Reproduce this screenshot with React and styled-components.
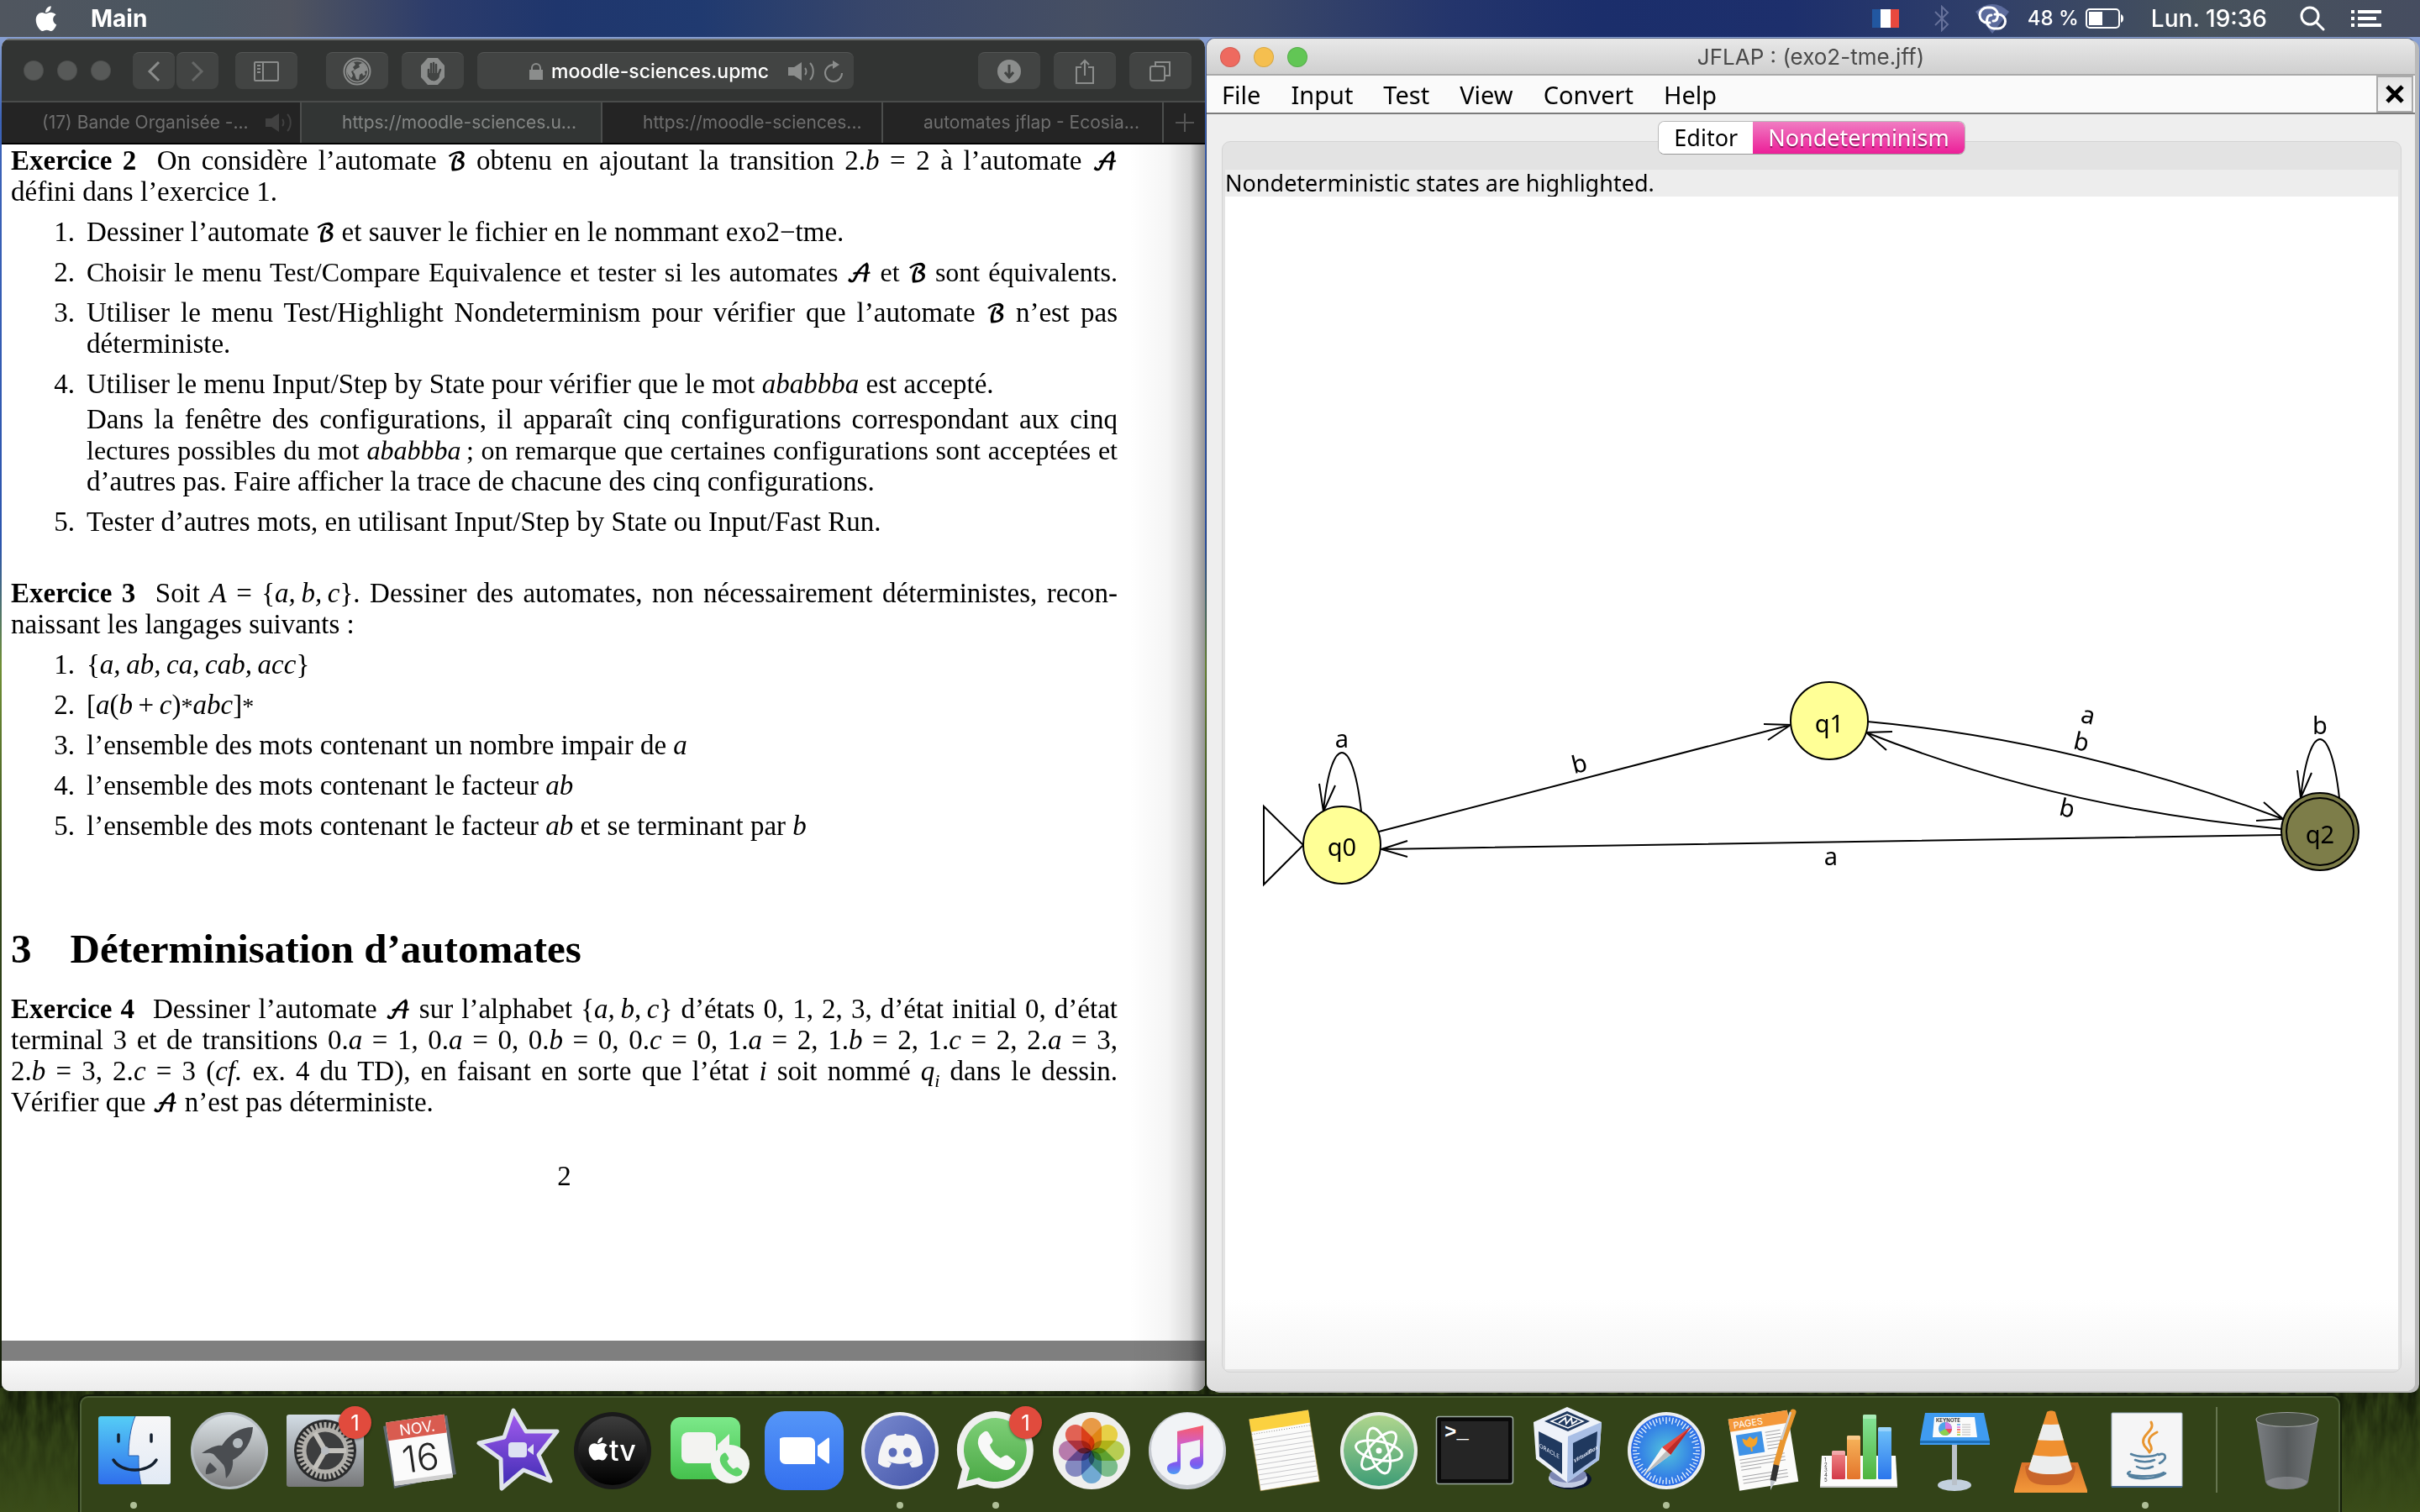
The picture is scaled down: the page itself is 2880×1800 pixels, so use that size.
import React from "react";
import styled, { createGlobalStyle } from "styled-components";

const ui = `Inter, "Liberation Sans", sans-serif`;
const java = `"Noto Sans", "Open Sans", sans-serif`;
const tex = `"Liberation Serif", "Times New Roman", serif`;

const Global = createGlobalStyle`
  *, *::before, *::after { box-sizing: border-box; }
  body { margin: 0; font-family: ${ui}; }
  button { border: 0; margin: 0; padding: 0; background: none; font: inherit; color: inherit; }
  svg { display: block; }
  p, h2, ol { margin: 0; padding: 0; }
`;

const Desktop = styled.div`
  min-height: 100vh;
  display: grid;
  grid-template-rows: auto 1fr auto;
  position: relative;
  overflow: hidden;
  background: linear-gradient(#a9bade 0, #3c63b8 8%, #2c55ad 36%, #6f8f35 44%, #32461a 60%, #141d09 92%, #2b3a13 96%, #3a4c18 100%);
`;

const Grass = styled.svg`
  position: absolute;
  left: 0;
  bottom: 0;
  width: 100%;
  height: 148px;
`;

/* ---------- menu bar ---------- */

const MenuBar = styled.header`
  position: relative;
  height: 44px;
  display: flex;
  align-items: center;
  justify-content: space-between;
  padding: 0 46px 0 42px;
  color: #fff;
  font-size: 28px;
  line-height: 32px;
  background: linear-gradient(90deg, #50565f 0, #4a5560 8%, #50545f 12%, #2c3c6b 18%, #1f366d 23%, #203a70 29%, #38466a 36%, #464f63 45%, #3a4768 52%, #24356c 60%, #1b2e6b 66%, #1d2f6c 74%, #303f69 82%, #47525c 91%, #464d60 100%);
`;

const MenuGroup = styled.div`
  display: flex;
  align-items: center;
`;

const AppName = styled.button`
  margin-left: 40px;
  font-weight: 700;
`;

const Status = styled.button`
  display: flex;
  align-items: center;
  margin-left: ${(p) => p.$gap}px;
  font-size: ${(p) => (p.$small ? 24 : 28)}px;
  font-weight: 500;
  white-space: nowrap;
`;

/* ---------- windows ---------- */

const Workspace = styled.main`
  position: relative;
  display: grid;
  grid-template-columns: 1432fr 1438fr;
  gap: 2px;
  padding: 2px 6px 6px 2px;
`;

const Browser = styled.section`
  min-width: 0;
  display: flex;
  flex-direction: column;
  border-radius: 10px;
  overflow: hidden;
  background: #fff;
`;

const Toolbar = styled.div`
  height: 76px;
  display: flex;
  align-items: center;
  padding: 0 16px 0 26px;
  background: #323433;
  border-top: 2px solid #6c6f6d;
  border-bottom: 2px solid #4a4c4b;
`;

const Lights = styled.div`
  display: flex;
  gap: 16px;
`;

const Light = styled.button`
  width: 24px;
  height: 24px;
  border-radius: 50%;
  background: ${(p) => p.$color};
  box-shadow: inset 0 0 0 1px rgba(0, 0, 0, 0.12);
`;

const ToolButton = styled.button`
  flex: none;
  width: ${(p) => (p.$narrow ? 50 : 74)}px;
  height: 44px;
  margin-left: ${(p) => p.$gap || 16}px;
  display: grid;
  place-items: center;
  border-radius: 8px;
  background: #424443;
  border-top: 1px solid #555756;
  color: ${(p) => (p.$dim ? "#666867" : "#8b8d8c")};
`;

const Address = styled.label`
  flex: 0 0 448px;
  min-width: 0;
  height: 44px;
  margin-left: 16px;
  margin-right: auto;
  padding: 0 12px 0 62px;
  display: flex;
  align-items: center;
  gap: 10px;
  border-radius: 8px;
  background: #424443;
  border-top: 1px solid #555756;
  color: #8b8d8c;
`;

const AddressInput = styled.input`
  flex: 1;
  width: 0;
  min-width: 0;
  padding: 0;
  border: 0;
  outline: 0;
  background: none;
  color: #fff;
  font: 500 23px/32px ${ui};
`;

const Tabs = styled.nav`
  height: 50px;
  display: grid;
  grid-template-columns: 357fr 358fr 334fr 334fr 49fr;
  background: #242424;
  border-bottom: 2px solid #000;
`;

const Tab = styled.button`
  min-width: 0;
  display: flex;
  align-items: center;
  justify-content: flex-start;
  gap: 20px;
  padding-left: 48px;
  font-size: 21px;
  line-height: 28px;
  white-space: nowrap;
  border-right: 2px solid #4c4e4d;
  background: ${(p) => (p.$active ? "#323534" : "#242424")};
  color: ${(p) => (p.$active ? "#858786" : "#6f6f6f")};

  svg { color: #414141; }
`;

const NewTab = styled.button`
  display: grid;
  place-items: center;
  color: #555;
`;

const Pdf = styled.div`
  flex: 1;
  display: flex;
  flex-direction: column;
  background: #7f7f7f;
  position: relative;

  &::after {
    content: "";
    position: absolute;
    inset: 0 0 0 auto;
    width: 90px;
    background: linear-gradient(90deg, rgba(0, 0, 0, 0) 0, rgba(0, 0, 0, 0.04) 50%, rgba(0, 0, 0, 0.14) 80%, rgba(0, 0, 0, 0.42) 100%);
    pointer-events: none;
  }
`;

const Page = styled.article`
  flex: 1;
  padding: 1px 104px 0 11px;
  background: #fff;
  color: #000;
  font-family: ${tex};
  font-size: 33px;
  line-height: 37px;
`;

const NextPage = styled.div`
  height: 36px;
  margin-top: 24px;
  background: linear-gradient(#fafafa, #ececec);
`;

const Line = styled.span`
  display: block;
  white-space: nowrap;
  font-size: ${(p) => (p.$tight ? 32 : 33)}px;
  text-align-last: ${(p) => (p.$fill || p.$tight ? "justify" : "left")};
`;

const Paragraph = styled.p`
  margin-top: ${(p) => p.$gap || 0}px;
`;

const Label = styled.strong`
  margin-right: 12px;
`;

const List = styled.ol`
  list-style: none;
  counter-reset: item;
`;

const Item = styled.li`
  counter-increment: item;
  display: grid;
  grid-template-columns: 76px minmax(0, 1fr);
  column-gap: 14px;
  margin-top: 11px;

  &::before {
    content: counter(item) ".";
    text-align: right;
  }
`;

const Heading = styled.h2`
  display: flex;
  gap: 46px;
  margin-top: 102px;
  margin-bottom: 27px;
  font-size: 49px;
  line-height: 52px;
`;

const Script = styled.span`
  font-family: "DejaVu Math TeX Gyre", "DejaVu Serif", "DejaVu Sans", serif;
  font-size: 28px;
  font-weight: 700;
  line-height: 0;
`;

const Sub = styled.sub`
  font-size: 22px;
  line-height: 0;
`;

const Star = styled.span`
  font-size: 28px;
  line-height: 0;
`;

const PageNumber = styled(Paragraph)`
  text-align: center;
`;

/* ---------- JFLAP ---------- */

const Jflap = styled.section`
  min-width: 0;
  display: flex;
  flex-direction: column;
  border-radius: 10px;
  background: #eeeeee;
  box-shadow: 5px 2px 0 #b9b9b9, 0 0 0 1px rgba(0, 0, 0, 0.35);
  font-family: ${java};
`;

const TitleBar = styled.div`
  height: 44px;
  display: grid;
  grid-template-columns: 1fr auto 1fr;
  align-items: center;
  padding: 2px 16px 0;
  border-radius: 10px 10px 0 0;
  background: linear-gradient(#e8e8e8, #cfcfcf);
  border-bottom: 2px solid #a9a9a9;
`;

const Title = styled.span`
  font: 400 26px/32px ${ui};
  color: #4a4a4a;
`;

const JMenuBar = styled.nav`
  height: 46px;
  display: flex;
  align-items: stretch;
  background: #fafafa;
  border-bottom: 2px solid #7b7b7b;
`;

const JMenu = styled.button`
  padding: 2px 18px 0;
  font-size: 29px;
  line-height: 36px;
`;

const CloseTab = styled.button`
  width: 44px;
  margin-left: auto;
  margin-right: 2px;
  display: grid;
  place-items: center;
  border: 2px solid #aaaaaa;
  background: linear-gradient(#e4e4e4, #f6f6f6);
`;

const JBody = styled.div`
  flex: 1;
  display: flex;
  flex-direction: column;
  padding: 8px 16px 22px 18px;
  border-radius: 0 0 10px 10px;
  background: linear-gradient(#eeeeee 96%, #dddddd);
`;

const Segments = styled.div`
  position: relative;
  align-self: center;
  display: flex;
  height: 40px;
  margin-bottom: -16px;
  border-radius: 8px;
  overflow: hidden;
  border: 1px solid #b9b9b9;
  border-bottom-color: #999;
  background: #fff;
`;

const Segment = styled.button`
  padding: 0 18px;
  font-size: 27px;
  line-height: 36px;
  color: ${(p) => (p.$on ? "#fff" : "#000")};
  text-shadow: ${(p) => (p.$on ? "0 2px 1px rgba(80, 0, 50, 0.6)" : "none")};
  background: ${(p) => (p.$on ? "linear-gradient(#f07cc2, #ec1e98)" : "#fff")};
`;

const Group = styled.div`
  flex: 1;
  display: flex;
  flex-direction: column;
  padding: 33px 3px 3px;
  border: 1px solid #d4d4d4;
  border-radius: 10px;
  background: #e3e3e3;
`;

const Notice = styled.p`
  height: 32px;
  background: #ededed;
  font-size: 27px;
  line-height: 32px;
`;

const Canvas = styled.div`
  flex: 1;
  background: linear-gradient(#fff 94%, #f5f5f5);
`;

const Diagram = styled.svg`
  width: 100%;
  height: auto;
  font-family: ${java};
  font-size: 29px;
`;

/* ---------- dock ---------- */

const Dock = styled.footer`
  position: relative;
  justify-self: center;
  display: flex;
  padding: 4px 5px 4px;
  border: 2px solid #4e6038;
  border-bottom: 0;
  border-radius: 10px 10px 0 0;
  background: #334318;
  box-shadow: 0 0 0 2px #141d0a;
`;

const DockItem = styled.button`
  width: 114px;
  display: flex;
  flex-direction: column;
  align-items: center;
  gap: 8px;
  position: relative;
`;

const Dot = styled.span`
  width: 8px;
  height: 8px;
  border-radius: 50%;
  background: ${(p) => (p.$on ? "#afbf97" : "transparent")};
`;

const Badge = styled.span`
  position: absolute;
  top: 6px;
  left: 73px;
  width: 39px;
  height: 39px;
  border-radius: 50%;
  background: #e14b3d;
  color: #fff;
  font-size: 26px;
  line-height: 39px;
  text-align: center;
  box-shadow: 0 1px 3px rgba(0, 0, 0, 0.5);
`;

const Separator = styled.span`
  width: 2px;
  height: 102px;
  margin: 7px 25px 0 27px;
  background: #66754f;
`;

/* ---------- small drawings ---------- */

const applePath =
  "M18.7 1.2c.2 2-.6 3.9-1.7 5.3-1.2 1.4-3 2.5-4.9 2.4-.2-1.9.7-3.9 1.8-5.2 1.2-1.4 3.200-2.400 4.800-2.500zM24.500 11.500c-.3.200-3.300 1.900-3.300 5.700 0 4.400 3.900 6 4 6-.1.200-.6 2.200-2.100 4.200-1.200 1.800-2.500 3.600-4.600 3.600-2 0-2.500-1.200-4.900-1.200-2.300 0-3.100 1.200-5 1.200-1.900 0-3.200-1.700-4.700-3.700C2.100 24.900.7 21.200.7 17.600c0-5.700 3.700-8.700 7.300-8.700 2 0 3.600 1.300 4.800 1.300 1.200 0 3-1.400 5.300-1.400.9 0 4 .1 6.400 2.700z";

const Speaker = () => (
  <svg width="32" height="24" viewBox="0 0 32 24" fill="none" stroke="currentColor" strokeWidth="2">
    <path d="M0 7h7l9-6v22l-9-6H0z" fill="currentColor" stroke="none" />
    <path d="M20 8c2 2 2 6 0 8M26 2c5 5 5 15 0 20" />
  </svg>
);

const Chevron = ({ right }) => (
  <svg width="16" height="26" viewBox="0 0 16 26" fill="none" stroke="currentColor" strokeWidth="3">
    <path d={right ? "M2 2l11 11L2 24" : "M14 2L3 13l11 11"} />
  </svg>
);

/* ---------- dock icons ---------- */

const Svg = ({ children }) => (
  <svg width="114" height="112" viewBox="0 0 114 112">
    {children}
  </svg>
);

const range = (n) => Array.from({ length: n }, (_, i) => i);

const Finder = () => (
  <Svg>
    <defs>
      <linearGradient id="fa" x1="0" y1="0" x2="0" y2="1"><stop stopColor="#55cdf6" /><stop offset="1" stopColor="#2f6fec" /></linearGradient>
      <linearGradient id="fb" x1="0" y1="0" x2="0" y2="1"><stop stopColor="#f7f7f8" /><stop offset="1" stopColor="#e2eaf5" /></linearGradient>
    </defs>
    <rect x="15" y="18" width="86" height="81" rx="3" fill="url(#fa)" />
    <path d="M59 18C53 32 51 50 51 65h12c0 12 0 22 3 34h32a3 3 0 0 0 3-3V21a3 3 0 0 0-3-3z" fill="url(#fb)" />
    <path d="M59 18C53 32 51 50 51 65h12c0 12 0 22 3 34" fill="none" stroke="#2b5fae" strokeWidth="1" />
    <path d="M39 40v8M78 40v8M33 70c10 16 41 16 51 0" fill="none" stroke="#14202f" strokeWidth="3.500" strokeLinecap="round" />
  </Svg>
);

const Launchpad = () => (
  <Svg>
    <defs><linearGradient id="la" x1="0" y1="0" x2="0" y2="1"><stop stopColor="#dbe2e6" /><stop offset="1" stopColor="#7e7f80" /></linearGradient></defs>
    <circle cx="57" cy="59" r="46" fill="#b7bec4" />
    <circle cx="57" cy="59" r="43" fill="url(#la)" />
    <path d="M85 31c-15 0-28 8-37 22-7-1-15 3-24 9 5 0 10-1 14 1l12 13c3 5 2 10 3 16 5-5 9-13 8-22C76 62 84 47 85 31z" fill="#4a4d51" />
    <path d="M34 73c-3 3-6 8-5 14 6 0 11-2 13-6z" fill="#4a4d51" />
    <circle cx="67" cy="50" r="6" fill="#b3babf" />
  </Svg>
);

const Prefs = () => (
  <Svg>
    <defs><linearGradient id="pa" x1="0" y1="0" x2="0" y2="1"><stop stopColor="#d3dde5" /><stop offset="1" stopColor="#77787a" /></linearGradient></defs>
    <rect x="11" y="16" width="92" height="86" rx="3" fill="url(#pa)" />
    <circle cx="57" cy="59" r="37" fill="#2a2b2c" />
    <g fill="#b2b0ab">
      {range(36).map((i) => <rect key={i} x="55.500" y="25" width="3" height="8" transform={`rotate(${i * 10} 57 59)`} />)}
    </g>
    <circle cx="57" cy="59" r="25" fill="#3d3e3f" stroke="#b2b0ab" strokeWidth="5" />
    <g stroke="#c3c1bc" strokeWidth="6"><path d="M57 59h25M57 59L44.500 37.500M57 59L44.500 80.500" /></g>
    <circle cx="57" cy="59" r="5" fill="#b9bcc0" />
  </Svg>
);

const Calendar = () => (
  <Svg>
    <path d="M12 30L88 17l11 70-74 17z" fill="#606a72" />
    <g transform="rotate(-8 57 57)">
      <rect x="20" y="20" width="70" height="76" fill="#fbfbfb" />
      <path d="M20 96h70v-5H20z" fill="#cfcfcf" />
      <rect x="20" y="20" width="70" height="22" fill="#d95c50" />
      <text x="56" y="38" fontSize="18" fill="#fff" textAnchor="middle" fontFamily="Inter">NOV.</text>
      <text x="55" y="83" fontSize="44" fontWeight="300" fill="#222" textAnchor="middle" fontFamily="Inter">16</text>
    </g>
  </Svg>
);

const IMovie = () => (
  <Svg>
    <defs><linearGradient id="ia" x1="0" y1="0" x2="0" y2="1"><stop stopColor="#a65df0" /><stop offset="1" stopColor="#3c2bb2" /></linearGradient></defs>
    <path d="M53 11l15 25 37 0-22 28 14 31-32-13-26 22-1-35-26-19 30-7z" fill="url(#ia)" stroke="#dfe4ec" strokeWidth="5" strokeLinejoin="round" />
    <rect x="47" y="49" width="22" height="18" rx="4" fill="#dde1f2" />
    <path d="M70 57l7-6v13l-7-5z" fill="#dde1f2" />
  </Svg>
);

const AppleTv = () => (
  <Svg>
    <circle cx="57" cy="59" r="46" fill="#1a1a1a" />
    <defs><linearGradient id="ta" x1="0" y1="0" x2="0" y2="1"><stop stopColor="#3d3d3d" /><stop offset="1" stopColor="#000" /></linearGradient></defs>
    <circle cx="57" cy="59" r="41" fill="url(#ta)" />
    <path transform="translate(28 42) scale(.92)" d={applePath} fill="#fff" />
    <text x="53" y="71" fontSize="34" fontWeight="500" fill="#fff" fontFamily="Inter">tv</text>
  </Svg>
);

const phonePath = "M6 2c2-2 4-2 5 0l3 5c1 2 0 3-2 5 1 4 5 9 9 11 2-1 4-3 6-2l5 4c2 1 1 3 0 5-3 4-8 4-13 1C10 27 3 18 2 11c0-4 1-7 4-9z";

const FaceTime = () => (
  <Svg>
    <defs><linearGradient id="ga" x1="0" y1="0" x2="0" y2="1"><stop stopColor="#7ce98a" /><stop offset="1" stopColor="#45c14d" /></linearGradient></defs>
    <rect x="12" y="19" width="83" height="74" rx="12" fill="url(#ga)" />
    <rect x="25" y="37" width="41" height="37" rx="8" fill="#f3f3f1" />
    <path d="M68 52l14-13v34L68 61z" fill="#f3f3f1" />
    <circle cx="83" cy="75" r="23" fill="#f2f4f1" />
    <path transform="translate(69 61) scale(.86)" d={phonePath} fill="#5ed269" />
  </Svg>
);

const Zoom = () => (
  <Svg>
    <defs><linearGradient id="za" x1="0" y1="0" x2="0" y2="1"><stop stopColor="#5596f8" /><stop offset="1" stopColor="#3470ef" /></linearGradient></defs>
    <rect x="10" y="12" width="94" height="94" rx="24" fill="url(#za)" />
    <path d="M34 43h29c4 0 7 3 7 7v25H35c-4 0-7-3-7-7V45c0-1 3-2 6-2zM73 53l12-9c1-1 2 0 2 1v28c0 1-1 2-2 1l-12-9z" fill="#fff" />
  </Svg>
);

const Discord = () => (
  <Svg>
    <defs><linearGradient id="da" x1="0" y1="0" x2="1" y2="1"><stop stopColor="#7a8bd0" /><stop offset="1" stopColor="#4354a8" /></linearGradient></defs>
    <circle cx="57" cy="59" r="46" fill="#f0f1f3" />
    <circle cx="57" cy="59" r="42" fill="url(#da)" />
    <path d="M40 43c4-3 8-4 12-4l1 2h9l1-2c4 0 8 1 12 4 6 9 9 20 9 31-3 4-8 5-13 5l-3-5 5-3c-10 5-21 5-31 0l5 3-3 5c-5 0-10-2-13-5 0-11 3-22 9-31z" fill="#f4f4f5" />
    <ellipse cx="48.500" cy="61" rx="5" ry="5.500" fill="#5b6cba" /><ellipse cx="66" cy="61" rx="5" ry="5.500" fill="#5b6cba" />
  </Svg>
);

const WhatsApp = () => (
  <Svg>
    <defs><linearGradient id="wa" x1="0" y1="0" x2="0" y2="1"><stop stopColor="#7fd078" /><stop offset="1" stopColor="#4caa47" /></linearGradient></defs>
    <path d="M57 12a46 46 0 1 1-22 87L11 105l6-24A46 46 0 0 1 57 12z" fill="#efefef" />
    <path d="M57 20a38 38 0 1 1-20 71l-15 4 4-15A38 38 0 0 1 57 20z" fill="url(#wa)" />
    <path transform="translate(33 35) scale(1.420)" d={phonePath} fill="#f8f8f8" />
  </Svg>
);

const petals = ["#f7952d", "#f6d92e", "#b9d53c", "#6fc083", "#63a9dc", "#7a80c6", "#b96fae", "#ee4f3f"];
const Petal = styled.rect`
  mix-blend-mode: multiply;
`;
const Photos = () => (
  <Svg>
    <circle cx="57" cy="59" r="46" fill="#efefee" />
    {petals.map((c, i) => (
      <Petal key={c} x="45" y="20" width="24" height="39" rx="12" fill={c} opacity=".86" transform={`rotate(${i * 45} 57 59)`} />
    ))}
  </Svg>
);

const Music = () => (
  <Svg>
    <defs><linearGradient id="ma" x1="0" y1="0" x2="0" y2="1"><stop stopColor="#f75b66" /><stop offset=".4" stopColor="#cf5fd0" /><stop offset=".8" stopColor="#7a5cf0" /><stop offset="1" stopColor="#4a9cf5" /></linearGradient></defs>
    <circle cx="57" cy="59" r="46" fill="#c5c9cf" />
    <circle cx="57" cy="57" r="43" fill="#f1f3f6" />
    <path d="M45 36l31-7v44c0 5-4 8-8 8-5 0-8-3-8-7 0-5 5-7 12-8V46l-23 5v28c0 5-4 8-8 8-5 0-8-3-8-7 0-5 5-7 12-8z" fill="url(#ma)" />
  </Svg>
);

const Notes = () => (
  <Svg>
    <g transform="rotate(-9 57 59)">
      <rect x="23" y="16" width="71" height="86" fill="#fbfbfa" stroke="#b59a4a" strokeWidth=".6" />
      <rect x="23" y="16" width="71" height="15" fill="#fbd140" />
      <path d="M23 34h71" stroke="#888" strokeDasharray="1 2" />
      {range(10).map((i) => <path key={i} d={`M24 ${41 + i * 6}h69`} stroke="#c9c9cc" strokeWidth="1" />)}
    </g>
  </Svg>
);

const Atom = () => (
  <Svg>
    <defs><linearGradient id="aa" x1="0" y1="0" x2="0" y2="1"><stop stopColor="#b0d68d" /><stop offset="1" stopColor="#3e9d76" /></linearGradient></defs>
    <circle cx="57" cy="59" r="46" fill="#e9ece9" />
    <circle cx="57" cy="59" r="42" fill="url(#aa)" />
    <g fill="none" stroke="#fff" strokeWidth="3">
      <ellipse cx="57" cy="59" rx="28" ry="11" transform="rotate(12 57 59)" />
      <ellipse cx="57" cy="59" rx="28" ry="11" transform="rotate(72 57 59)" />
      <ellipse cx="57" cy="59" rx="28" ry="11" transform="rotate(132 57 59)" />
    </g>
    <circle cx="57" cy="59" r="3.500" fill="#fff" />
  </Svg>
);

const Terminal = () => (
  <Svg>
    <rect x="11.500" y="18.500" width="91" height="80" rx="3" fill="#0a0a0a" stroke="#9aa8a0" strokeWidth="1.500" />
    <rect x="17" y="24" width="80" height="69" fill="#252525" />
    <text x="21" y="44" fontSize="24" fontWeight="700" fill="#fff" fontFamily="Liberation Mono, monospace">&gt;_</text>
  </Svg>
);

const VBox = () => (
  <Svg>
    <ellipse cx="57" cy="93" rx="25" ry="12" fill="#0c1634" />
    <ellipse cx="54" cy="92" rx="23" ry="11" fill="#c3cbe2" />
    <ellipse cx="54" cy="88" rx="22" ry="9" fill="#7c87b3" />
    <path d="M53 7l41 18-3 45-38 27-37-28-3-44z" fill="#eef2f9" />
    <path d="M54 42l40-17-3 45-38 27z" fill="#a9bfe6" />
    <path d="M53 12l27 12-26 12-28-12z" fill="#20395f" />
    <path d="M53 16l19 8-18 8-20-8z" fill="none" stroke="#fff" strokeWidth="1.500" />
    <path d="M43 26l8-6 1 7 6-7 1 7 6-4" fill="none" stroke="#fff" strokeWidth="1.800" />
    <path d="M19 36l28 14v37L20 66z" fill="#20395f" />
    <path d="M60 50l29-14-2 32-27 19z" fill="#20395f" />
    <text transform="matrix(.86 .5 0 1 20 55)" fontSize="7" fill="#e8eefc" fontFamily="Inter">ORACLE</text>
    <text transform="matrix(.82 -.5 0 1 61 74)" fontSize="7" fontWeight="700" fill="#e8eefc" fontFamily="Liberation Sans Narrow, Liberation Sans">VirtualBox</text>
  </Svg>
);

const Safari = () => (
  <Svg>
    <defs><radialGradient id="sa"><stop stopColor="#52c3dd" /><stop offset="1" stopColor="#2a6be8" /></radialGradient></defs>
    <circle cx="57" cy="59" r="46" fill="#eceef0" />
    <circle cx="57" cy="59" r="42" fill="url(#sa)" />
    <g stroke="#e9f4fb" strokeWidth="1.300">
      {range(60).map((i) => <path key={i} d={i % 2 ? "M57 19v5" : "M57 19v8"} transform={`rotate(${i * 6} 57 59)`} />)}
    </g>
    <path d="M87 30L52 55l10 9z" fill="#e5473e" />
    <path d="M87 30L57 59.500l5 4.500z" fill="#b92b28" />
    <path d="M30 88l22-33 10 9z" fill="#f4f4f4" />
    <path d="M30 88l27-28.500 5 4.500z" fill="#bdbdbd" />
  </Svg>
);

const Pages = () => (
  <Svg>
    <g transform="rotate(-9 57 59)">
      <rect x="23" y="16" width="71" height="86" fill="#fbfbfa" />
      <rect x="23" y="16" width="71" height="15" fill="#f4983a" />
      <text x="28" y="28" fontSize="11" fill="#fff" fontFamily="Inter">PAGES</text>
      <rect x="29" y="36" width="31" height="25" fill="#3f92e6" />
      <path d="M44 58v-5c-6-1-8-6-8-12l5 3 4-4 4 4 5-3c0 6-2 11-8 12v5z" fill="#f5a32a" />
      {range(6).map((i) => <path key={i} d={`M64 ${38 + i * 4}h18`} stroke="#a5a5a8" strokeWidth="1" />)}
      {range(8).map((i) => <path key={i} d={`M29 ${66 + i * 4}h${i === 3 ? 24 : 54}`} stroke="#a5a5a8" strokeWidth={i === 4 ? 0 : 1} />)}
    </g>
    <path d="M94 13L82 47 74 75" fill="none" stroke="#e9962e" strokeWidth="7" strokeLinecap="round" />
    <path d="M91 13L80 46" stroke="#c9ced4" strokeWidth="2.500" />
    <path d="M74 76l-4 19" stroke="#333" strokeWidth="7" />
    <path d="M67 94l6 1-6 11z" fill="#bfc4cb" />
  </Svg>
);

const bars = [
  { x: 26, y: 59, a: "#f08a8a", b: "#d33a48" },
  { x: 44, y: 41, a: "#f7b65c", b: "#e3742b" },
  { x: 63, y: 16, a: "#86e59a", b: "#4fb43d" },
  { x: 81, y: 31, a: "#6fc3fa", b: "#2b76ec" },
];
const Numbers = () => (
  <Svg>
    <path d="M14 65h88l2 36H12z" fill="#fcfcfc" />
    <path d="M12 101h92v2H12z" fill="#c8c8c8" />
    {[1, 2, 3, 4, 5].map((n) => <text key={n} x="17" y={66 + n * 6} fontSize="6" fill="#333" fontFamily="Inter">{n}</text>)}
    {bars.map((b, i) => (
      <g key={b.x}>
        <defs><linearGradient id={`nb${i}`} x1="0" y1="0" x2="0" y2="1"><stop stopColor={b.a} /><stop offset="1" stopColor={b.b} /></linearGradient></defs>
        <rect x={b.x} y={b.y} width="16" height={93 - b.y} rx="1.500" fill={`url(#nb${i})`} />
        <rect x={b.x} y={b.y} width="16" height="5" rx="1.500" fill="#fff" opacity=".3" />
      </g>
    ))}
  </Svg>
);

const Keynote = () => (
  <Svg>
    <ellipse cx="58" cy="100" rx="20" ry="7" fill="#c3d0de" />
    <path d="M58 52v48" stroke="#bac1c9" strokeWidth="6" />
    <path d="M23 14h70l7 33v5H17v-5z" fill="#3f9bf0" />
    <path d="M17 47h83v3H17z" fill="#1d6fb9" />
    <path d="M34 19h48l3 24H32z" fill="#fbfbfb" />
    <text x="36" y="25" fontSize="6" fontWeight="700" fill="#333" fontFamily="Inter">KEYNOTE</text>
    <circle cx="47" cy="33" r="8" fill="#4fa3e8" />
    <path d="M47 33v-8a8 8 0 0 1 8 8z" fill="#d57be0" />
    <path d="M47 33h8a8 8 0 0 1-3 6z" fill="#ef4d55" />
    <path d="M47 33l5 6a8 8 0 0 1-12-2z" fill="#8cd04e" />
    {["#4fa3e8", "#d57be0", "#ef4d55", "#f3a23a", "#8cd04e"].map((c, i) => <path key={c} d={`M61 ${28 + i * 3}h4`} stroke={c} strokeWidth="1.500" />)}
    <path d="M67 28h10M67 31h10M67 34h10M67 37h10M67 40h10" stroke="#bbb" strokeWidth="1" />
  </Svg>
);

const Vlc = () => (
  <Svg>
    <defs>
      <linearGradient id="va" x1="0" y1="0" x2="0" y2="1"><stop stopColor="#d9722a" /><stop offset="1" stopColor="#f3993a" /></linearGradient>
      <clipPath id="vc"><path d="M54 13c2-2 8-2 10 0l20 68c-6 8-46 8-52 0z" /></clipPath>
    </defs>
    <path d="M24 73h67l11 33v3H15v-3z" fill="url(#va)" />
    <path d="M28 78c8-8 54-8 60 0-2 20-8 22-30 22s-28-4-30-22z" fill="#c9652a" />
    <g clipPath="url(#vc)">
      <rect x="20" y="8" width="80" height="90" fill="#ef9030" />
      <path d="M20 25q38 6 80 0v18q-42 8-80 0zM20 60q38 12 80 0v40H20z" fill="#eceded" />
    </g>
  </Svg>
);

const Java = () => (
  <Svg>
    <rect x="17" y="14" width="84" height="88" rx="1" fill="#f5f5f6" stroke="#9fb0c4" />
    <path d="M17 102h84" stroke="#4a6c94" strokeWidth="2" />
    <g fill="none" strokeLinecap="round">
      <path d="M64 25c6 11-15 15-8 28 2 3 5 5 6 8M71 37c-8 4-12 9-8 15 2 4 2 6-1 9" stroke="#e8952f" strokeWidth="3" />
      <path d="M40 63c8 4 26 4 32 0M73 64c8-4 12 4 1 10M45 70c6 3 17 3 23 0M47 78c5 3 13 3 19 0M39 84c-14 5 28 8 40 1M38 89c10 5 34 4 43-3" stroke="#54809f" strokeWidth="2.600" />
    </g>
  </Svg>
);

const Trash = () => (
  <Svg>
    <defs><linearGradient id="xa" x1="0" x2="1"><stop stopColor="#80838a" /><stop offset=".5" stopColor="#5a5d62" /><stop offset="1" stopColor="#7b7e84" /></linearGradient></defs>
    <path d="M21 22l11 74c2 12 48 12 51 0l12-74z" fill="url(#xa)" opacity=".93" />
    <ellipse cx="58" cy="22" rx="37" ry="8.500" fill="#4c5349" stroke="#9da19f" strokeWidth="1.200" />
    <path d="M33 96c8-8 42-8 49 0-6 12-44 12-49 0z" fill="#a6a9ad" opacity=".45" />
  </Svg>
);

const dock = [
  { name: "Finder", icon: Finder, open: true },
  { name: "Launchpad", icon: Launchpad },
  { name: "Préférences", icon: Prefs, badge: "1" },
  { name: "Calendrier", icon: Calendar },
  { name: "iMovie", icon: IMovie },
  { name: "TV", icon: AppleTv },
  { name: "FaceTime", icon: FaceTime },
  { name: "Zoom", icon: Zoom },
  { name: "Discord", icon: Discord, open: true },
  { name: "WhatsApp", icon: WhatsApp, open: true, badge: "1" },
  { name: "Photos", icon: Photos },
  { name: "Musique", icon: Music },
  { name: "Notes", icon: Notes },
  { name: "Atom", icon: Atom },
  { name: "Terminal", icon: Terminal },
  { name: "VirtualBox", icon: VBox },
  { name: "Safari", icon: Safari, open: true },
  { name: "Pages", icon: Pages },
  { name: "Numbers", icon: Numbers },
  { name: "Keynote", icon: Keynote },
  { name: "VLC", icon: Vlc },
  { name: "Java", icon: Java, open: true },
];

const DockTile = ({ name, icon: Icon, open, badge }) => (
  <DockItem aria-label={name}>
    <Icon />
    {badge && <Badge>{badge}</Badge>}
    <Dot $on={open} />
  </DockItem>
);

/* ---------- page text ---------- */

const A = () => <Script>𝒜</Script>;
const B = () => <Script>ℬ</Script>;

const Document = () => (
  <Page>
    <Paragraph>
      <Line $fill><Label>Exercice 2</Label> On considère l’automate <B /> obtenu en ajoutant la transition 2.<i>b</i> = 2 à l’automate <A /></Line>
      <Line>défini dans l’exercice 1.</Line>
    </Paragraph>
    <List>
      <Item><Line>Dessiner l’automate <B /> et sauver le fichier en le nommant exo2−tme.</Line></Item>
      <Item><Line $tight>Choisir le menu Test/Compare Equivalence et tester si les automates <A /> et <B /> sont équivalents.</Line></Item>
      <Item>
        <div>
          <Line $fill>Utiliser le menu Test/Highlight Nondeterminism pour vérifier que l’automate <B /> n’est pas</Line>
          <Line>déterministe.</Line>
        </div>
      </Item>
      <Item>
        <div>
          <Line>Utiliser le menu Input/Step by State pour vérifier que le mot <i>ababbba</i> est accepté.</Line>
          <Paragraph $gap={5}>
            <Line $fill>Dans la fenêtre des configurations, il apparaît cinq configurations correspondant aux cinq</Line>
            <Line $tight>lectures possibles du mot <i>ababbba</i>{"\u2009"}; on remarque que certaines configurations sont acceptées et</Line>
            <Line>d’autres pas. Faire afficher la trace de chacune des cinq configurations.</Line>
          </Paragraph>
        </div>
      </Item>
      <Item><Line>Tester d’autres mots, en utilisant Input/Step by State ou Input/Fast Run.</Line></Item>
    </List>
    <Paragraph $gap={48}>
      <Line $fill><Label>Exercice 3</Label> Soit <i>A</i> = {"{"}<i>a,{"\u2009"}b,{"\u2009"}c</i>{"}"}. Dessiner des automates, non nécessairement déterministes, recon-</Line>
      <Line>naissant les langages suivants :</Line>
    </Paragraph>
    <List>
      <Item><Line>{"{"}<i>a,{"\u2009"}ab,{"\u2009"}ca,{"\u2009"}cab,{"\u2009"}acc</i>{"}"}</Line></Item>
      <Item><Line>[<i>a</i>(<i>b</i>{"\u2009"}+{"\u2009"}<i>c</i>)<Star>*</Star><i>abc</i>]<Star>*</Star></Line></Item>
      <Item><Line>l’ensemble des mots contenant un nombre impair de <i>a</i></Line></Item>
      <Item><Line>l’ensemble des mots contenant le facteur <i>ab</i></Line></Item>
      <Item><Line>l’ensemble des mots contenant le facteur <i>ab</i> et se terminant par <i>b</i></Line></Item>
    </List>
    <Heading><span>3</span><span>Déterminisation d’automates</span></Heading>
    <Paragraph>
      <Line $fill><Label>Exercice 4</Label> Dessiner l’automate <A /> sur l’alphabet {"{"}<i>a,{"\u2009"}b,{"\u2009"}c</i>{"}"} d’états 0, 1, 2, 3, d’état initial 0, d’état</Line>
      <Line $fill>terminal 3 et de transitions 0.<i>a</i> = 1, 0.<i>a</i> = 0, 0.<i>b</i> = 0, 0.<i>c</i> = 0, 1.<i>a</i> = 2, 1.<i>b</i> = 2, 1.<i>c</i> = 2, 2.<i>a</i> = 3,</Line>
      <Line $fill>2.<i>b</i> = 3, 2.<i>c</i> = 3 (<i>cf.</i> ex. 4 du TD), en faisant en sorte que l’état <i>i</i> soit nommé <i>q</i><Sub><i>i</i></Sub> dans le dessin.</Line>
      <Line>Vérifier que <A /> n’est pas déterministe.</Line>
    </Paragraph>
    <PageNumber $gap={51}>2</PageNumber>
  </Page>
);

/* ---------- automaton ---------- */

const Automaton = () => (
  <Diagram viewBox="1458 234 1396 1390">
    <g fill="none" stroke="#000" strokeWidth="2">
      <path d="M1504 960v93l47-47z" />
      <path d="M1641 990L2131 863M2099 862l32 1-27 18" />
      <path d="M2222 859Q2467 881 2717 975M2694 955l23 20-32 2" />
      <path d="M2716 987Q2447 962 2221 872M2252 871l-31 1 24 21" />
      <path d="M2715 994L1644 1011M1675 1001l-31 10 31 9" />
      <path d="M1620 966C1614 912 1604 896 1597 896S1580 912 1575 966M1570 933l5 33 14-31" />
      <path d="M2784 950C2778 896 2768 880 2761 880S2744 896 2738 950M2734 917l4 33 13-30" />
    </g>
    <g stroke="#000" strokeWidth="2">
      <circle cx="1597" cy="1006" r="46" fill="#ffff96" />
      <circle cx="2177" cy="858" r="46" fill="#ffff96" />
      <circle cx="2761" cy="990" r="46" fill="#7d7d49" />
      <circle cx="2761" cy="990" r="40" fill="none" />
    </g>
    <g textAnchor="middle">
      <text x="1597" y="1019">q0</text>
      <text x="2177" y="872">q1</text>
      <text x="2761" y="1004">q2</text>
      <text x="1597" y="890">a</text>
      <text x="2761" y="874">b</text>
      <text transform="translate(1882 919) rotate(-14)">b</text>
      <text transform="translate(2483 861) rotate(13)">a</text>
      <text transform="translate(2475 893) rotate(13)">b</text>
      <text transform="translate(2458 972) rotate(13)">b</text>
      <text x="2179" y="1030">a</text>
    </g>
  </Diagram>
);

export default function App() {
  return (
    <>
      <Global />
      <Desktop>
        <Grass preserveAspectRatio="none">
          <filter id="grass"><feTurbulence type="fractalNoise" baseFrequency="0.09 0.025" numOctaves="3" seed="4" /><feColorMatrix values="0 0 0 0 .04  0 0 0 0 .07  0 0 0 0 .01  1.600 0 0 0 -.45" /></filter>
          <rect width="100%" height="100%" filter="url(#grass)" />
        </Grass>

        <MenuBar>
          <MenuGroup>
            <svg width="26" height="32" viewBox="0 0 26 32" fill="#fff"><path d={applePath} /></svg>
            <AppName>Main</AppName>
          </MenuGroup>
          <MenuGroup>
            <Status aria-label="Clavier français">
              <svg width="32" height="22" viewBox="0 0 32 22"><path d="M0 0h10v22H0z" fill="#2257a0" /><path d="M10 0h12v22H10z" fill="#fff" /><path d="M22 0h10v22H22z" fill="#e8493e" /></svg>
            </Status>
            <Status $gap={42} aria-label="Bluetooth">
              <svg width="18" height="32" viewBox="0 0 18 32" fill="none" stroke="#66719a" strokeWidth="2"><path d="M1 8l15 15-7 7V2l7 7L1 24" /></svg>
            </Status>
            <Status $gap={31} aria-label="Partage de connexion">
              <svg width="40" height="36" viewBox="0 0 40 36" fill="none">
                <path d="M0 10Q20-8 40 10L20 36z" fill="#5c6b9c" />
                <g stroke="#fff" strokeWidth="3" strokeLinecap="round">
                  <path d="M17 23h-3a9 9 0 0 1 0-18h4a9 9 0 0 1 8 12 5 5 0 0 1-5 4" />
                  <path d="M23 13h4a8 8 0 0 1 0 17h-5a9 9 0 0 1-8-12 5 5 0 0 1 5-4" />
                </g>
              </svg>
            </Status>
            <Status $gap={22} $small>48 %</Status>
            <Status $gap={8} aria-label="Batterie">
              <svg width="46" height="26" viewBox="0 0 46 26" fill="none"><rect x="1" y="2" width="39" height="22" rx="4" stroke="#fff" strokeWidth="2" /><rect x="4" y="5" width="16" height="16" fill="#fff" /><path d="M42 8c4 1 4 9 0 10z" fill="#fff" /></svg>
            </Status>
            <Status $gap={32}>Lun. 19:36</Status>
            <Status $gap={39} aria-label="Rechercher">
              <svg width="30" height="30" viewBox="0 0 30 30" fill="none" stroke="#fff" strokeWidth="3"><circle cx="12" cy="12" r="10" /><path d="M19 19l9 9" strokeLinecap="round" /></svg>
            </Status>
            <Status $gap={31} aria-label="Notifications">
              <svg width="36" height="20" viewBox="0 0 36 20" stroke="#fff" strokeWidth="4"><path d="M0 2h4M8 2h28M0 10h4M8 10h22M0 18h4M8 18h28" /></svg>
            </Status>
          </MenuGroup>
        </MenuBar>

        <Workspace>
          <Browser>
            <Toolbar>
              <Lights>
                <Light $color="#575958" aria-label="Fermer" />
                <Light $color="#575958" aria-label="Réduire" />
                <Light $color="#575958" aria-label="Agrandir" />
              </Lights>
              <ToolButton $narrow $gap={26} aria-label="Précédent"><Chevron /></ToolButton>
              <ToolButton $narrow $dim $gap={2} aria-label="Suivant"><Chevron right /></ToolButton>
              <ToolButton $gap={20} aria-label="Barre latérale">
                <svg width="30" height="24" viewBox="0 0 30 24" fill="none" stroke="currentColor" strokeWidth="2"><rect x="1" y="1" width="28" height="22" rx="1" /><path d="M11 1v22M4 5h4M4 9h4M4 13h4" /></svg>
              </ToolButton>
              <ToolButton $gap={34} aria-label="Extension globe">
                <svg width="34" height="34" viewBox="0 0 34 34" fill="currentColor"><circle cx="17" cy="17" r="15.500" fill="none" stroke="currentColor" strokeWidth="2" /><circle cx="17" cy="17" r="12.500" fill="none" stroke="currentColor" strokeWidth="1.500" /><path d="M5 14c1-4 4-7 8-8l2 3-3 3 2 3-4 2 2 5-2 3c-3-3-6-7-5-11zM16 14l4-2-1-3 4-2c4 2 6 6 6 9l-3 1 1 4-3 1-1-3-3 2-1 6-3-1-2-6-2-3z" /></svg>
              </ToolButton>
              <ToolButton aria-label="Bloqueur">
                <svg width="34" height="34" viewBox="0 0 34 34"><path d="M11 1h12l8 9v14l-8 9H11l-8-9V10z" fill="currentColor" /><path d="M12 23v-8M15 20V8M18 19V7M21 20V9M12 20c0 9 12 10 12 0l2-5" fill="none" stroke="#424443" strokeWidth="2.500" strokeLinecap="round" /><path d="M12 19h11v5c-2 5-9 5-11 0z" fill="#424443" /></svg>
              </ToolButton>
              <Address>
                <svg width="16" height="20" viewBox="0 0 16 20"><rect y="8" width="16" height="12" fill="currentColor" /><path d="M3 9V6a5 5 0 0 1 10 0v3" fill="none" stroke="currentColor" strokeWidth="2" /></svg>
                <AddressInput aria-label="Adresse" defaultValue="moodle-sciences.upmc" />
                <Speaker />
                <svg width="24" height="26" viewBox="0 0 24 26"><path d="M12 5a10 10 0 1 0 10 10" fill="none" stroke="currentColor" strokeWidth="2" /><path d="M11 0l8 5-8 5z" fill="currentColor" /></svg>
              </Address>
              <ToolButton aria-label="Téléchargements">
                <svg width="28" height="28" viewBox="0 0 28 28"><circle cx="14" cy="14" r="14" fill="currentColor" /><path d="M14 6v14M9 15l5 6 5-6" fill="none" stroke="#424443" strokeWidth="3" /></svg>
              </ToolButton>
              <ToolButton aria-label="Partager">
                <svg width="24" height="30" viewBox="0 0 24 30" fill="none" stroke="currentColor" strokeWidth="2"><path d="M8 10H2v19h20V10h-6M12 20V2M7 7l5-5 5 5" /></svg>
              </ToolButton>
              <ToolButton aria-label="Onglets">
                <svg width="26" height="26" viewBox="0 0 26 26" fill="none" stroke="currentColor" strokeWidth="2"><rect x="1" y="7" width="17" height="17" rx="2" /><path d="M7 7V2h17v16h-6" /></svg>
              </ToolButton>
            </Toolbar>
            <Tabs>
              <Tab>(17) Bande Organisée -...<Speaker /></Tab>
              <Tab $active>https://moodle-sciences.u...</Tab>
              <Tab>https://moodle-sciences...</Tab>
              <Tab>automates jflap - Ecosia...</Tab>
              <NewTab aria-label="Nouvel onglet">
                <svg width="22" height="22" viewBox="0 0 22 22" stroke="currentColor" strokeWidth="2"><path d="M11 0v22M0 11h22" /></svg>
              </NewTab>
            </Tabs>
            <Pdf>
              <Document />
              <NextPage />
            </Pdf>
          </Browser>

          <Jflap>
            <TitleBar>
              <Lights>
                <Light $color="#ee6a5f" aria-label="Fermer" />
                <Light $color="#f5bf4f" aria-label="Réduire" />
                <Light $color="#62c655" aria-label="Agrandir" />
              </Lights>
              <Title>JFLAP : (exo2-tme.jff)</Title>
            </TitleBar>
            <JMenuBar>
              {["File", "Input", "Test", "View", "Convert", "Help"].map((m) => <JMenu key={m}>{m}</JMenu>)}
              <CloseTab aria-label="Fermer l’onglet">
                <svg width="22" height="22" viewBox="0 0 22 22" stroke="#000" strokeWidth="5"><path d="M2 2l18 18M20 2L2 20" /></svg>
              </CloseTab>
            </JMenuBar>
            <JBody>
              <Segments>
                <Segment>Editor</Segment>
                <Segment $on>Nondeterminism</Segment>
              </Segments>
              <Group>
                <Notice>Nondeterministic states are highlighted.</Notice>
                <Canvas><Automaton /></Canvas>
              </Group>
            </JBody>
          </Jflap>
        </Workspace>

        <Dock>
          {dock.map((d) => <DockTile key={d.name} {...d} />)}
          <Separator />
          <DockTile name="Corbeille" icon={Trash} />
        </Dock>
      </Desktop>
    </>
  );
}
